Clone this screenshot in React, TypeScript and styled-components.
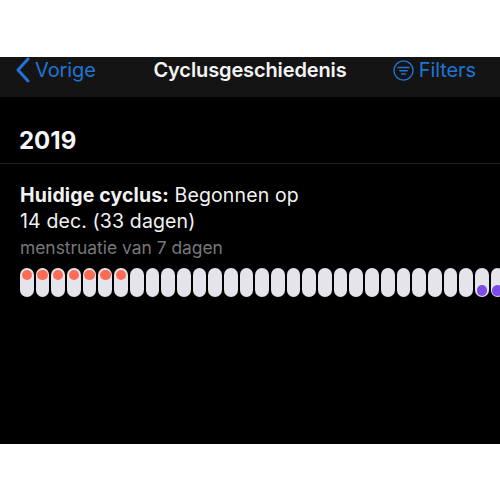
import React from 'react'
import styled, { createGlobalStyle } from 'styled-components'

const GlobalStyle = createGlobalStyle`
  html, body {
    margin: 0;
    padding: 0;
    background: #ffffff;
  }
  body {
    font-family: Inter, "Liberation Sans", sans-serif;
  }
`

const PERIOD_DAYS = 7
const OVULATION_DAYS = [29, 30]
const TOTAL_PILLS = 31

const Page = styled.div`
  width: 500px;
  height: 500px;
  padding-top: 57px;
  box-sizing: border-box;
  background: #ffffff;
  overflow: hidden;
`

const Screen = styled.div`
  height: 387px;
  background: #000000;
  overflow: hidden;
`

const NavBar = styled.div`
  height: 40px;
  box-sizing: border-box;
  padding: 0 24px 14px;
  background: #141414;
  display: grid;
  grid-template-columns: 1fr auto 1fr;
  align-items: center;
`

const NavLink = styled.div<{ $end?: boolean }>`
  display: flex;
  align-items: center;
  gap: 5px;
  justify-content: ${(p) => (p.$end ? 'flex-end' : 'flex-start')};
  margin-left: ${(p) => (p.$end ? '0' : '-9px')};
  color: #1f74d6;
  font-size: 20px;
  letter-spacing: -0.1px;
`

const NavTitle = styled.div`
  color: #f4f4f4;
  font-size: 20px;
  font-weight: 600;
  letter-spacing: -0.12px;
`

const YearRow = styled.div`
  height: 67px;
  box-sizing: border-box;
  padding: 29px 19px 0;
  border-bottom: 1px solid #1e1e1e;
  color: #f6f6f6;
  font-size: 24px;
  font-weight: 700;
  line-height: 29px;
`

const Cycle = styled.div`
  padding: 18px 0 0 20px;
`

const CycleText = styled.div`
  color: #f2f2f2;
  font-size: 19.5px;
  line-height: 26px;
  width: 320px;
  letter-spacing: 0.13px;
  strong {
    font-weight: 700;
  }
`

const Duration = styled.div`
  margin-top: 3px;
  color: #77777b;
  font-size: 17.4px;
  line-height: 22px;
  letter-spacing: 0;
`

const PillRow = styled.div`
  display: flex;
  gap: 2px;
  margin-top: 9px;
`

const Pill = styled.div<{ $kind: 'period' | 'ovulation' | 'plain' }>`
  flex: none;
  width: 13.7px;
  height: 29px;
  border-radius: 7px;
  background: #e4e4ea;
  display: flex;
  justify-content: center;
  align-items: ${(p) => (p.$kind === 'ovulation' ? 'flex-end' : 'flex-start')};
  padding: ${(p) => (p.$kind === 'ovulation' ? '0 0 1.5px' : '1.5px 0 0')};
  box-sizing: border-box;
`

const Dot = styled.div<{ $color: string }>`
  width: 10.5px;
  height: 10.5px;
  border-radius: 50%;
  background: ${(p) => p.$color};
`

const BackIcon = () => (
  <svg width="15" height="26" viewBox="0 0 15 26" fill="none">
    <path d="M13 2 3 13l10 11" stroke="#1f74d6" strokeWidth="3" strokeLinecap="round" strokeLinejoin="round" />
  </svg>
)

const FilterIcon = () => (
  <svg width="21" height="21" viewBox="0 0 21 21" fill="none" stroke="#1f74d6" strokeWidth="1.4" strokeLinecap="round">
    <circle cx="10.5" cy="10.5" r="9.6" />
    <path d="M5 7.5h11M6.8 10.8h7.4M8.6 14h3.8" />
  </svg>
)

const kindOf = (day: number) => {
  if (day < PERIOD_DAYS) return 'period'
  if (OVULATION_DAYS.includes(day)) return 'ovulation'
  return 'plain'
}

const App: React.FC = () => {
  const pills = Array.from({ length: TOTAL_PILLS }, (_, day) => kindOf(day))

  return (
    <Page>
      <GlobalStyle />
      <Screen>
        <NavBar>
          <NavLink>
            <BackIcon />
            Vorige
          </NavLink>
          <NavTitle>Cyclusgeschiedenis</NavTitle>
          <NavLink $end>
            <FilterIcon />
            Filters
          </NavLink>
        </NavBar>
        <YearRow>2019</YearRow>
        <Cycle>
          <CycleText>
            <strong>Huidige cyclus:</strong> Begonnen op
            <br />
            14 dec. (33 dagen)
          </CycleText>
          <Duration>menstruatie van 7 dagen</Duration>
          <PillRow>
            {pills.map((kind, i) => (
              <Pill key={i} $kind={kind}>
                {kind === 'period' && <Dot $color="#ff6b55" />}
                {kind === 'ovulation' && <Dot $color="#7d4bea" />}
              </Pill>
            ))}
          </PillRow>
        </Cycle>
      </Screen>
    </Page>
  )
}

export default App
